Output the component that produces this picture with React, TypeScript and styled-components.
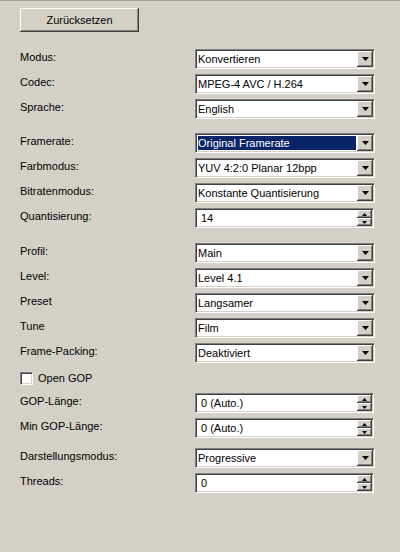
import React from 'react';
import styled, { createGlobalStyle, css } from 'styled-components';

const GlobalStyle = createGlobalStyle`
  html, body {
    margin: 0;
    padding: 0;
    background: #d4d0c8;
  }
  body {
    font-family: 'Liberation Sans', Arial, sans-serif;
    font-size: 11px;
    color: #000;
  }
`;

const sunken = css`
  border: 1px solid;
  border-color: #808080 #ffffff #ffffff #808080;
  box-shadow: inset 1px 1px 0 #404040, inset -1px -1px 0 #d4d0c8;
  padding: 1px;
  box-sizing: border-box;
`;

const raised = css`
  background: #d4d0c8;
  box-shadow: inset -1px -1px 0 #404040, inset 1px 1px 0 #ffffff,
    inset -2px -2px 0 #808080, inset 2px 2px 0 #d4d0c8;
`;

const Panel = styled.div`
  width: 400px;
  height: 552px;
  box-sizing: border-box;
  border-top: 1px solid #a09d96;
  padding: 7px 0 0 20px;
  background: #d4d0c8;
`;

const ResetButton = styled.button`
  ${raised};
  width: 119px;
  height: 24px;
  border: none;
  padding: 0;
  font-family: 'Liberation Sans', Arial, sans-serif;
  font-size: 11px;
  color: #000;
  display: block;
`;

const Form = styled.div`
  display: flex;
  flex-direction: column;
  margin-top: 17px;
`;

const Row = styled.div<{ $gap?: number }>`
  display: grid;
  grid-template-columns: 175px 180px;
  height: 25px;
  margin-top: ${(p) => p.$gap ?? 0}px;
`;

const Label = styled.div`
  line-height: 13px;
  padding-top: 2px;
  white-space: nowrap;
`;

const ComboBox = styled.div`
  ${sunken};
  display: flex;
  width: 180px;
  height: 20px;
  background: #fff;
`;

const SpinBox = styled(ComboBox)`
  width: 179px;
`;

const Value = styled.div<{ $selected?: boolean; $inset?: number }>`
  flex: 1;
  line-height: 14px;
  margin: 1px;
  padding-left: ${(p) => p.$inset ?? 0}px;
  white-space: nowrap;
  overflow: hidden;
  ${(p) =>
    p.$selected &&
    css`
      background: #0a246a;
      color: #fff;
    `}
`;

const DropButton = styled.div`
  ${raised};
  width: 16px;
  height: 16px;
  display: flex;
  align-items: center;
  justify-content: center;
  flex-shrink: 0;
`;

const SpinButtons = styled.div`
  display: flex;
  flex-direction: column;
  width: 15px;
  flex-shrink: 0;
`;

const SpinButton = styled.div`
  ${raised};
  height: 8px;
  display: flex;
  align-items: center;
  justify-content: center;
`;

const CheckRow = styled.label`
  display: flex;
  align-items: center;
  gap: 5px;
  height: 20px;
  margin-bottom: 5px;
`;

const CheckBox = styled.span`
  ${sunken};
  display: inline-block;
  width: 13px;
  height: 13px;
  background: #fff;
`;

const DownArrow = () => (
  <svg width="7" height="4" viewBox="0 0 7 4">
    <path d="M0 0h7L3.5 4z" fill="#000" />
  </svg>
);

const SmallArrow = ({ up }: { up?: boolean }) => (
  <svg width="5" height="3" viewBox="0 0 5 3">
    <path d={up ? 'M2.5 0L5 3H0z' : 'M0 0h5L2.5 3z'} fill="#000" />
  </svg>
);

type Field =
  | { kind: 'combo'; label: string; value: string; gap?: number; selected?: boolean }
  | { kind: 'spin'; label: string; value: string; gap?: number }
  | { kind: 'check'; label: string; gap?: number };

const fields: Field[] = [
  { kind: 'combo', label: 'Modus:', value: 'Konvertieren' },
  { kind: 'combo', label: 'Codec:', value: 'MPEG-4 AVC / H.264' },
  { kind: 'combo', label: 'Sprache:', value: 'English' },
  { kind: 'combo', label: 'Framerate:', value: 'Original Framerate', gap: 9, selected: true },
  { kind: 'combo', label: 'Farbmodus:', value: 'YUV 4:2:0 Planar 12bpp' },
  { kind: 'combo', label: 'Bitratenmodus:', value: 'Konstante Quantisierung' },
  { kind: 'spin', label: 'Quantisierung:', value: '14' },
  { kind: 'combo', label: 'Profil:', value: 'Main', gap: 10 },
  { kind: 'combo', label: 'Level:', value: 'Level 4.1' },
  { kind: 'combo', label: 'Preset', value: 'Langsamer' },
  { kind: 'combo', label: 'Tune', value: 'Film' },
  { kind: 'combo', label: 'Frame-Packing:', value: 'Deaktiviert' },
  { kind: 'check', label: 'Open GOP' },
  { kind: 'spin', label: 'GOP-Länge:', value: '0 (Auto.)' },
  { kind: 'spin', label: 'Min GOP-Länge:', value: '0 (Auto.)' },
  { kind: 'combo', label: 'Darstellungsmodus:', value: 'Progressive', gap: 5 },
  { kind: 'spin', label: 'Threads:', value: '0' },
];

const App: React.FC = () => {
  return (
    <>
      <GlobalStyle />
      <Panel>
        <ResetButton>Zurücksetzen</ResetButton>
        <Form>
          {fields.map((f) => {
            if (f.kind === 'check') {
              return (
                <CheckRow key={f.label}>
                  <CheckBox />
                  {f.label}
                </CheckRow>
              );
            }
            return (
              <Row key={f.label} $gap={f.gap}>
                <Label>{f.label}</Label>
                {f.kind === 'combo' ? (
                  <ComboBox>
                    <Value $selected={f.selected} $inset={0}>
                      {f.value}
                    </Value>
                    <DropButton>
                      <DownArrow />
                    </DropButton>
                  </ComboBox>
                ) : (
                  <SpinBox>
                    <Value $inset={3}>{f.value}</Value>
                    <SpinButtons>
                      <SpinButton>
                        <SmallArrow up />
                      </SpinButton>
                      <SpinButton>
                        <SmallArrow />
                      </SpinButton>
                    </SpinButtons>
                  </SpinBox>
                )}
              </Row>
            );
          })}
        </Form>
      </Panel>
    </>
  );
};

export default App;
